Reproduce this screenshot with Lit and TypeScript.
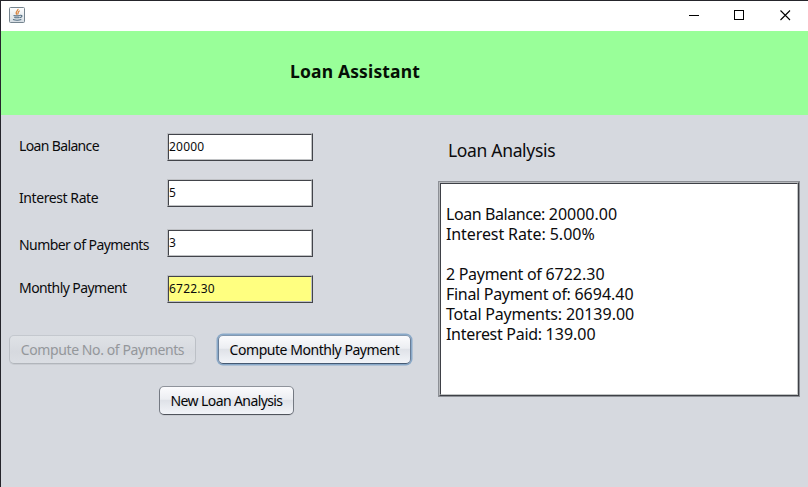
import { LitElement, html, css } from "lit";
import { customElement, property } from "lit/decorators.js";

@customElement("loan-field")
class LoanField extends LitElement {
  @property() label = "";
  @property() value = "";
  @property({ type: Boolean, reflect: true }) computed = false;

  static styles = css`
    :host { display: grid; grid-template-columns: 148px 146px; align-items: start; font-size: 14px; line-height: 18px; }
    .label { letter-spacing: var(--label-spacing, -0.57px); white-space: nowrap; padding-top: var(--label-offset, 5px); }
    .box {
      box-sizing: border-box; height: 28px; background: #fff;
      border: 1px solid; border-color: #bfc1c5 #42444a #42444a #bfc1c5;
      display: flex;
    }
    .value {
      flex: 1; box-sizing: border-box; border: 1px solid; border-color: #42444a #c0c2c4 #c0c2c4 #42444a;
      font-size: 12px; line-height: 23px; letter-spacing: 0.2px;
    }
    :host([computed]) .value { background: #ffff80; }
  `;

  render() {
    return html`<div class="label">${this.label}</div>
      <div class="box"><div class="value">${this.value}</div></div>`;
  }
}

@customElement("app-root")
class AppRoot extends LitElement {
  static styles = css`
    :host {
      display: flex; flex-direction: column; box-sizing: border-box; width: 808px; height: 487px;
      background: #d6d9df; border-top: 1px solid #25252b; border-left: 1px solid #25252b;
      font-family: "Noto Sans", sans-serif; color: #0b0b0d; overflow: hidden;
    }
    .titlebar { height: 30px; background: #fff; display: flex; justify-content: space-between; align-items: flex-start; flex: none; }
    .app-icon { margin: 6px 0 0 8px; display: block; }
    .controls { display: block; }
    .banner { height: 84px; flex: none; background: #99ff99; box-sizing: border-box; padding: 27px 0 0 289px; }
    .banner-title { margin: 0; font-weight: 700; font-size: 17.5px; line-height: 26px; letter-spacing: 0.15px; color: #051005; white-space: nowrap; }
    .content { display: grid; grid-template-columns: 437px 362px; flex: 1; }
    .form { padding: 18px 0 0 18px; }
    .f1 { margin-bottom: 18px; --label-offset: 4px; --label-spacing: -0.64px; }
    .f2 { margin-bottom: 22px; --label-offset: 10px; --label-spacing: -0.42px; }
    .f3 { margin-bottom: 18px; --label-offset: 7px; }
    .f4 { --label-offset: 4px; }
    .actions { display: flex; gap: 22px; margin: 32px 0 0 -10px; }
    .reset { margin: 22px 0 0 140px; display: flex; }
    .btn {
      box-sizing: border-box; height: 29px; padding: 0; font: 14px/26px "Noto Sans", sans-serif;
      color: #050507; letter-spacing: -0.33px; white-space: nowrap;
      border: 1px solid; border-color: #8f939b #747982 #50545c #747982; border-radius: 5px;
      background: linear-gradient(#fbfbfd, #eceef2 45%, #dfe2e8 50%, #f2f4f8);
      box-shadow: 0 1px 0 #c9ccd2;
    }
    .wide { width: 187px; letter-spacing: -0.4px; }
    .main { width: 193px; letter-spacing: -0.46px; box-shadow: 0 0 0 1.5px #89a9c9; border-color: #8398b0 #687d97 #455972 #687d97; }
    .small { width: 135px; letter-spacing: -0.6px; }
    .btn:disabled { color: #94979b; border-color: #c4c8ce #bcc0c6 #b1b5bb #bcc0c6; background: linear-gradient(#dfe2e6, #d6d9df 60%, #dbdee3); }
    .analysis-title { margin: 22px 0 0 10px; font-weight: 400; font-size: 17.5px; line-height: 26px; letter-spacing: -0.33px; }
    .frame { margin-top: 18px; box-sizing: border-box; height: 216px; border: 1px solid #8d9096; background: #fff; display: flex; }
    .bevel { flex: 1; border: 1px solid; border-color: #b8babd #3e4046 #3e4046 #b8babd; display: flex; }
    .report {
      flex: 1; margin: 0; border: 1px solid; border-color: #3e4046 #c2c5c5 #c2c5c5 #3e4046;
      padding: 0 0 0 5px; font: 16px/20px "Noto Sans", sans-serif; letter-spacing: -0.3px;
    }
    .line { display: block; height: 20px; }
    .line:nth-child(2) { letter-spacing: -0.42px; }
    .line:nth-child(3) { letter-spacing: -0.1px; }
    .line:nth-child(7) { letter-spacing: -0.2px; }
    .num { letter-spacing: 0; }
  `;

  private report: [string, string][] = [
    ["", ""],
    ["Loan Balance: ", "20000.00"],
    ["Interest Rate: ", "5.00%"],
    ["", ""],
    ["2 Payment of ", "6722.30"],
    ["Final Payment of: ", "6694.40"],
    ["Total Payments: ", "20139.00"],
    ["Interest Paid: ", "139.00"],
  ];

  render() {
    return html`
      <header class="titlebar">
        <svg class="app-icon" width="16" height="16" viewBox="0 0 16 16" fill="none">
          <defs><linearGradient id="tile" x1="0" y1="0" x2="0" y2="1">
            <stop stop-color="#ffffff" /><stop offset="1" stop-color="#d5dde3" />
          </linearGradient></defs>
          <rect x=".5" y=".5" width="15" height="15" rx="1" fill="url(#tile)" stroke="#75848f" />
          <path d="M9 1.8C9.4 3.8 5.5 4.8 7.8 7.7M10.8 3.7C8.3 4.6 9.8 5.7 8.6 7.5" stroke="#d9853f" stroke-width="1.2" />
          <path d="M4.5 8.4c1.8.6 4.5.6 6.4 0M11 8.3c3-.5 2.4 2-.3 2.3M5.3 10.4c1.6.5 3.6.5 5 0M4 12.6c2.5.8 6 .8 8.3-.1" stroke="#546f83" stroke-width="1.1" />
        </svg>
        <svg class="controls" width="138" height="29" viewBox="0 0 138 29" fill="none" stroke="#000" shape-rendering="crispEdges">
          <path d="M19 14.5h10" />
          <rect x="64.5" y="9.5" width="9" height="9" />
          <path d="M110.5 9.5l9.5 9.5M120 9.5l-9.5 9.5" shape-rendering="auto" stroke-width="1.1" />
        </svg>
      </header>
      <div class="banner"><h1 class="banner-title">Loan Assistant</h1></div>
      <main class="content">
        <section class="form">
          <loan-field class="f1" label="Loan Balance" value="20000"></loan-field>
          <loan-field class="f2" label="Interest Rate" value="5"></loan-field>
          <loan-field class="f3" label="Number of Payments" value="3"></loan-field>
          <loan-field class="f4" label="Monthly Payment" value="6722.30" computed></loan-field>
          <div class="actions">
            <button class="btn wide" disabled>Compute No. of Payments</button>
            <button class="btn main">Compute Monthly Payment</button>
          </div>
          <div class="reset"><button class="btn small">New Loan Analysis</button></div>
        </section>
        <section>
          <h2 class="analysis-title">Loan Analysis</h2>
          <div class="frame"><div class="bevel"><pre class="report">${this.report.map(
            ([name, value]) => html`<span class="line">${name}<span class="num">${value}</span></span>`
          )}</pre></div></div>
        </section>
      </main>
    `;
  }
}
